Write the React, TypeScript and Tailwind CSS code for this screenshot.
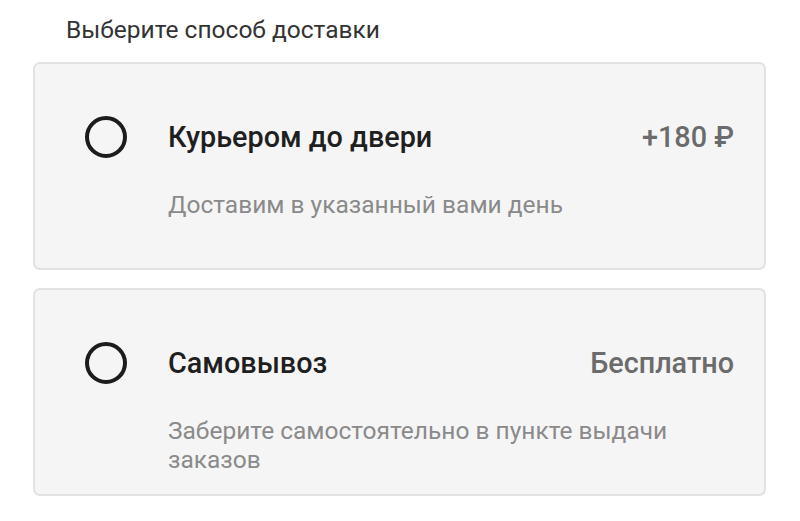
import { useState } from 'react';

// Способы доставки
interface DeliveryOption {
  id: string;
  title: string;
  price: string;
  description: string;
}

const options: DeliveryOption[] = [
  {
    id: 'courier',
    title: 'Курьером до двери',
    price: '+180 ₽',
    description: 'Доставим в указанный вами день',
  },
  {
    id: 'pickup',
    title: 'Самовывоз',
    price: 'Бесплатно',
    description: 'Заберите самостоятельно в пункте выдачи заказов',
  },
];

export default function App() {
  const [selected, setSelected] = useState<string | null>(null);

  return (
    <div className="min-h-screen bg-white font-['Roboto',sans-serif] pl-[33px] pr-[34px] pt-[15px]">
      <h2 className="pl-[33px] text-[24.5px] leading-[30px] text-[#333]">Выберите способ доставки</h2>

      <div className="mt-[17px] flex flex-col gap-[18px]">
        {options.map((opt) => (
          <div
            key={opt.id}
            className="h-[208px] cursor-pointer rounded-[7px] border-2 border-[#e2e2e2] bg-[#f5f5f5] pl-[50px] pr-[30px] pt-[52px]"
            onClick={() => setSelected(opt.id)}
          >
            <div className="flex items-center">
              <span className="flex h-[42px] w-[42px] shrink-0 items-center justify-center rounded-full border-[4px] border-[#1c1c1c]">
                {selected === opt.id && <span className="h-[20px] w-[20px] rounded-full bg-[#1c1c1c]" />}
              </span>
              <span className="ml-[41px] flex-1 text-[28.8px] font-medium leading-[42px] text-[#1f1f1f]">{opt.title}</span>
              <span className="text-[28.8px] font-medium leading-[42px] text-[#6b6b6b]">{opt.price}</span>
            </div>
            <p className="mt-[32px] pl-[83px] text-[24.5px] leading-[29px] text-[#8a8a8a]">{opt.description}</p>
          </div>
        ))}
      </div>
    </div>
  );
}
